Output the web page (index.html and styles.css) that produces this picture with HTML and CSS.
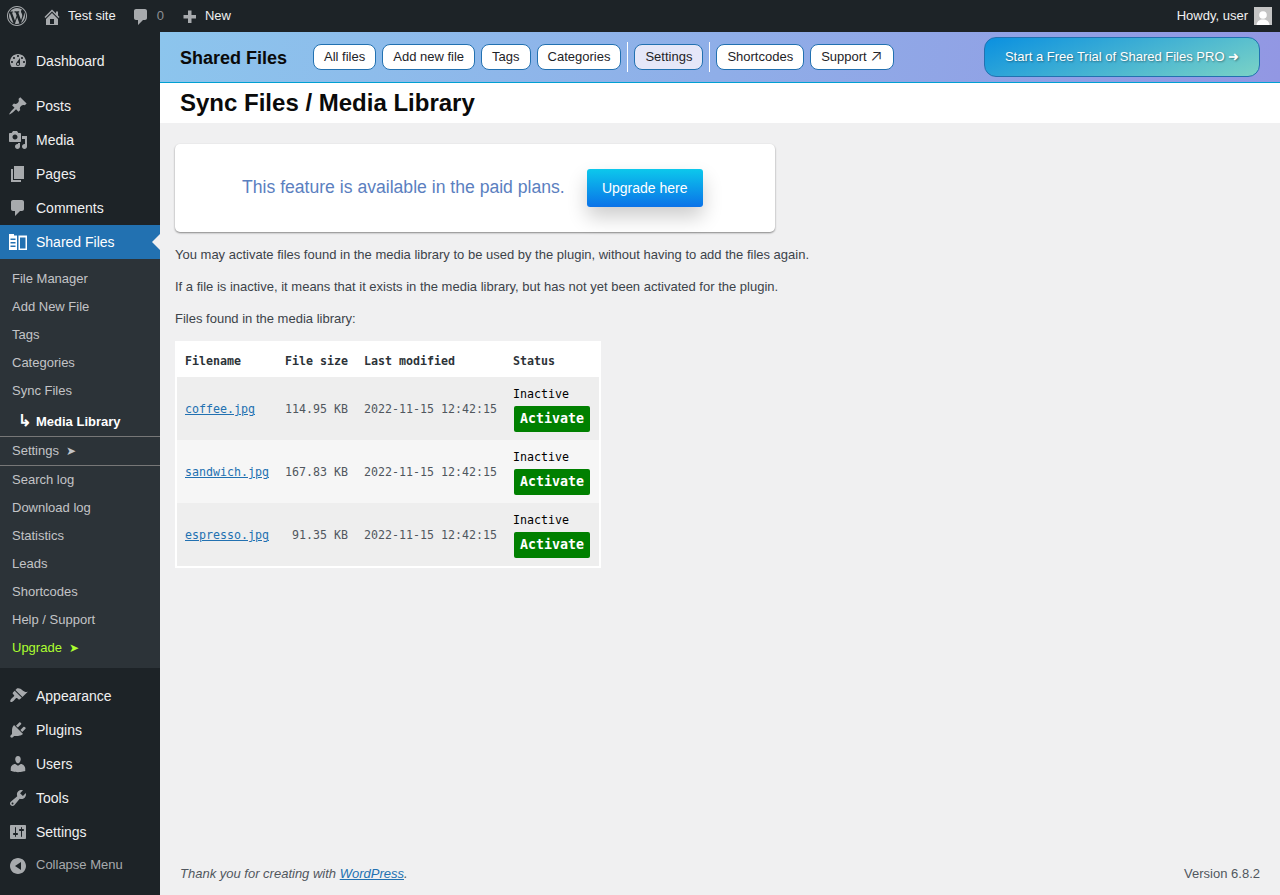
FILE: index.html
```html
<!DOCTYPE html>
<html lang="en">
<head>
<meta charset="utf-8">
<title>Sync Files / Media Library</title>
<link rel="stylesheet" href="styles.css">
</head>
<body>
<header class="adminbar">
  <svg class="bar-icon logo" viewBox="0 0 20 20"><path d="M20 10c0-5.52-4.48-10-10-10S0 4.48 0 10s4.48 10 10 10 10-4.48 10-10zM10 1.01c4.97 0 8.99 4.02 8.99 8.99s-4.02 8.99-8.99 8.99S1.01 14.97 1.01 10 5.03 1.01 10 1.01zM8.01 14.82L4.96 6.61c.49-.03 1.05-.08 1.05-.08.43-.05.38-1.01-.06-.99 0 0-1.29.1-2.13.1-.15 0-.33 0-.52-.01 1.44-2.17 3.9-3.6 6.7-3.6 2.09 0 3.99.79 5.41 2.09-.6-.08-1.45.35-1.45 1.42 0 .66.38 1.22.79 1.88.31.54.5 1.22.5 2.21 0 1.34-1.27 4.48-1.27 4.48l-2.71-7.5c.48-.03.75-.16.75-.16.43-.05.38-1.1-.05-1.08 0 0-1.3.11-2.14.11-.78 0-2.11-.11-2.11-.11-.43-.02-.48 1.06-.05 1.08l.84.08 1.12 3.04zm6.02 2.15L16.64 10s.67-1.69.39-3.81c.63 1.15.94 2.42.94 3.81 0 2.96-1.56 5.58-3.94 6.97zM2.68 6.77L6.5 17.25c-2.67-1.3-4.47-4.08-4.47-7.25 0-1.16.2-2.23.65-3.23zm7.45 4.53l2.29 6.25c-.75.27-1.57.42-2.42.42-.72 0-1.41-.11-2.06-.3z"/></svg>
  <svg class="bar-icon home" viewBox="0 0 20 20"><path d="M16 8.5l1.53 1.53-1.06 1.06L10 4.62l-6.47 6.47-1.06-1.06L10 2.5l4 4v-2h2v4zm-6-2.46l6 5.99V18H4v-5.97zM12 17v-5H8v5h4z"/></svg>
  <span class="bar-text">Test site</span>
  <svg class="bar-icon comment" viewBox="0 0 20 20"><path d="M5 2h9c1.1 0 2 .9 2 2v7c0 1.1-.9 2-2 2h-2l-5 5v-5H5c-1.1 0-2-.9-2-2V4c0-1.1.9-2 2-2z"/></svg>
  <span class="bar-text bar-count">0</span>
  <svg class="bar-icon plus" viewBox="0 0 20 20"><path d="M8 3.5h3.5V8H16v3.5h-4.5V16H8v-4.5H3.500V8H8z"/></svg>
  <span class="bar-text">New</span>
  <span class="bar-text howdy">Howdy, user</span>
  <svg class="avatar" viewBox="0 0 18 18"><rect width="18" height="18" fill="#c4c4c4"/><circle cx="9" cy="8" r="3.800" fill="#fff"/><path d="M2.500 18c.5-4 3-5.500 6.500-5.500s6 1.500 6.500 5.500z" fill="#fff"/></svg>
</header>

<div class="layout">
  <nav class="sidebar">
    <ul class="menu top-group">
      <li class="menu-item"><svg class="menu-icon" viewBox="0 0 20 20"><path d="M3.760 16h12.480c1.100-1.370 1.760-3.110 1.760-5 0-4.420-3.580-8-8-8s-8 3.580-8 8c0 1.890.66 3.630 1.760 5zM10 4c.55 0 1 .45 1 1s-.45 1-1 1-1-.45-1-1 .45-1 1-1zM6 6c.55 0 1 .45 1 1s-.45 1-1 1-1-.45-1-1 .45-1 1-1zm8 0c.55 0 1 .45 1 1s-.45 1-1 1-1-.45-1-1 .45-1 1-1zm-5.370 5.550L12 7v6c0 1.100-.9 2-2 2s-2-.9-2-2c0-.57.24-1.080.63-1.450zM4 10c.55 0 1 .45 1 1s-.45 1-1 1-1-.45-1-1 .45-1 1-1zm12 0c.55 0 1 .45 1 1s-.45 1-1 1-1-.45-1-1 .45-1 1-1zm-5 3c0-.55-.45-1-1-1s-1 .45-1 1 .45 1 1 1 1-.45 1-1z"/></svg>Dashboard</li>
    </ul>
    <ul class="menu mid-group">
      <li class="menu-item"><svg class="menu-icon" viewBox="0 0 20 20"><path d="M10.440 3.020l1.820-1.820 6.360 6.350-1.830 1.820c-1.050-.68-2.480-.57-3.410.36l-.75.75c-.92.93-1.040 2.350-.35 3.410l-1.830 1.820-2.410-2.410-2.800 2.790c-.42.42-3.380 2.710-3.800 2.290s1.860-3.390 2.280-3.810l2.790-2.790L4.100 9.360l1.830-1.820c1.050.69 2.480.57 3.400-.36l.75-.75c.93-.92 1.050-2.350.36-3.410z"/></svg>Posts</li>
      <li class="menu-item"><svg class="menu-icon" viewBox="0 0 20 20"><path d="M13 11V4c0-.55-.45-1-1-1h-1.670L9 1H5L3.670 3H2c-.55 0-1 .45-1 1v7c0 .55.45 1 1 1h10c.55 0 1-.45 1-1zM7 4.500c1.380 0 2.500 1.120 2.500 2.500S8.380 9.500 7 9.500 4.500 8.380 4.500 7 5.620 4.500 7 4.500zM14 6h5v10.500c0 1.380-1.120 2.500-2.500 2.500S14 17.880 14 16.500s1.120-2.500 2.500-2.500c.17 0 .34.02.5.05V9h-3V6zm-4 8.050V13h2v3.500c0 1.380-1.120 2.500-2.500 2.500S7 17.880 7 16.500 8.120 14 9.500 14c.17 0 .34.02.5.05z"/></svg>Media</li>
      <li class="menu-item"><svg class="menu-icon" viewBox="0 0 20 20"><path d="M6 15V2h10v13H6zm-1 1h8v2H3V5h2v11z"/></svg>Pages</li>
      <li class="menu-item"><svg class="menu-icon" viewBox="0 0 20 20"><path d="M5 2h9c1.100 0 2 .9 2 2v7c0 1.100-.9 2-2 2h-2l-5 5v-5H5c-1.100 0-2-.9-2-2V4c0-1.100.9-2 2-2z"/></svg>Comments</li>
      <li class="menu-item current"><svg class="menu-icon sf-icon" viewBox="0 0 18 16"><path fill="#fff" d="M0 0h5v1.500h3V16H0zM1.500 4.500v1.500h5V4.500zM1.500 8v1.500h5V8zM1.500 11.500V13h5v-1.500zM9.500 1.500H18V16H9.500zM11 3.500V14.500h5.500V3.500z"/></svg>Shared Files</li>
    </ul>
    <ul class="submenu">
      <li class="sub-item">File Manager</li>
      <li class="sub-item">Add New File</li>
      <li class="sub-item">Tags</li>
      <li class="sub-item">Categories</li>
      <li class="sub-item">Sync Files</li>
      <li class="sub-item sub-current"><span class="sub-arrow">↳</span>Media Library</li>
      <li class="sub-item sub-ruled">Settings<span class="sub-mark">➤</span></li>
      <li class="sub-item">Search log</li>
      <li class="sub-item">Download log</li>
      <li class="sub-item">Statistics</li>
      <li class="sub-item">Leads</li>
      <li class="sub-item">Shortcodes</li>
      <li class="sub-item">Help / Support</li>
      <li class="sub-item sub-upgrade">Upgrade<span class="sub-mark">➤</span></li>
    </ul>
    <ul class="menu low-group">
      <li class="menu-item"><svg class="menu-icon" viewBox="0 0 20 20"><path d="M14.480 11.060L7.410 3.990l1.500-1.500c.5-.56 2.300-.47 3.510.32 1.210.8 1.430 1.280 2.910 2.100 1.180.64 2.450 1.260 4.450.85zm-.71.71L6.700 4.700 4.930 6.470c-.39.39-.39 1.020 0 1.410l1.060 1.060c.39.39.39 1.030 0 1.420-.6.6-1.430 1.150-2.210 1.930-.76.76-2.160 2.690-1.330 3.520.83.830 2.760-.57 3.520-1.330.78-.78 1.330-1.610 1.930-2.210.39-.39 1.030-.39 1.420 0l1.060 1.060c.39.39 1.020.39 1.410 0z"/></svg>Appearance</li>
      <li class="menu-item"><svg class="menu-icon" viewBox="0 0 20 20"><path d="M13.110 4.360L9.870 7.600 8 5.730l3.240-3.240c.35-.34 1.050-.2 1.560.32.52.51.66 1.210.31 1.550zm-8 1.770l.91-1.120 9.010 9.010-1.190.84c-.71.71-2.630 1.160-3.820 1.160H6.140L4.900 17.260c-.59.59-1.540.59-2.120 0-.59-.58-.59-1.530 0-2.120l1.240-1.240v-3.880c0-1.130.4-3.190 1.090-3.890zm7.260 3.970l3.240-3.240c.34-.35 1.040-.21 1.550.31.52.51.66 1.210.31 1.550l-3.240 3.250z"/></svg>Plugins</li>
      <li class="menu-item"><svg class="menu-icon" viewBox="0 0 20 20"><path d="M10 9.250c-2.270 0-2.730-3.440-2.730-3.440C7 4.020 7.820 2 9.970 2c2.160 0 2.980 2.020 2.710 3.810 0 0-.41 3.440-2.680 3.440zm0 2.570L12.720 10c2.390 0 4.520 2.330 4.520 4.530v2.490s-3.650 1.130-7.240 1.130c-3.650 0-7.240-1.130-7.240-1.130v-2.490c0-2.250 1.940-4.480 4.470-4.480z"/></svg>Users</li>
      <li class="menu-item"><svg class="menu-icon" viewBox="0 0 20 20"><path d="M16.680 9.770c-1.340 1.340-3.300 1.670-4.950.99l-5.410 6.520c-.99.99-2.590.99-3.580 0s-.99-2.590 0-3.570l6.520-5.420c-.68-1.650-.35-3.610.99-4.950 1.280-1.280 3.120-1.620 4.720-1.060l-2.890 2.890 2.820 2.820 2.860-2.870c.53 1.580.18 3.390-1.080 4.670zM3.810 16.210c.4.39 1.040.39 1.430 0 .4-.4.4-1.040 0-1.430-.39-.4-1.030-.4-1.430 0-.39.39-.39 1.030 0 1.430z"/></svg>Tools</li>
      <li class="menu-item"><svg class="menu-icon" viewBox="0 0 20 20"><path d="M18 16V4c0-.55-.45-1-1-1H3c-.55 0-1 .45-1 1v12c0 .55.45 1 1 1h14c.55 0 1-.45 1-1zM8 11h1c.55 0 1 .45 1 1s-.45 1-1 1H8v1.500c0 .28-.22.5-.5.5s-.5-.22-.5-.5V13H6c-.55 0-1-.45-1-1s.45-1 1-1h1V5.500c0-.28.22-.5.5-.5s.5.22.5.5V11zm5-2h-1c-.55 0-1-.45-1-1s.45-1 1-1h1V5.500c0-.28.22-.5.5-.5s.5.22.5.5V7h1c.55 0 1 .45 1 1s-.45 1-1 1h-1v5.500c0 .28-.22.5-.5.5s-.5-.22-.5-.5V9z"/></svg>Settings</li>
      <li class="menu-item collapse"><svg class="menu-icon" viewBox="0 0 20 20"><path d="M18 10c0-4.420-3.580-8-8-8s-8 3.580-8 8 3.580 8 8 8 8-3.580 8-8zm-5-4v8l-6-4z"/></svg>Collapse Menu</li>
    </ul>
  </nav>

  <main class="main">
    <div class="plugin-head">
      <strong class="plugin-name">Shared Files</strong>
      <a class="pill">All files</a>
      <a class="pill">Add new file</a>
      <a class="pill">Tags</a>
      <a class="pill">Categories</a>
      <span class="divider"></span>
      <a class="pill pill-active">Settings</a>
      <span class="divider"></span>
      <a class="pill">Shortcodes</a>
      <a class="pill">Support <span class="ext-arrow">↗</span></a>
      <a class="trial">Start a Free Trial of Shared Files PRO ➜</a>
    </div>
    <h1 class="page-title">Sync Files / Media Library</h1>
    <div class="content">
      <div class="notice">
        <span class="notice-text">This feature is available in the paid plans.</span>
        <a class="upgrade-btn">Upgrade here</a>
      </div>
      <p class="copy">You may activate files found in the media library to be used by the plugin, without having to add the files again.</p>
      <p class="copy">If a file is inactive, it means that it exists in the media library, but has not yet been activated for the plugin.</p>
      <p class="copy">Files found in the media library:</p>
      <table class="files">
        <thead>
          <tr><th>Filename</th><th>File size</th><th>Last modified</th><th>Status</th></tr>
        </thead>
        <tbody>
          <tr class="odd"><td><a class="file-link">coffee.jpg</a></td><td class="num">114.95 KB</td><td>2022-11-15 12:42:15</td><td class="status">Inactive<a class="activate">Activate</a></td></tr>
          <tr class="even"><td><a class="file-link">sandwich.jpg</a></td><td class="num">167.83 KB</td><td>2022-11-15 12:42:15</td><td class="status">Inactive<a class="activate">Activate</a></td></tr>
          <tr class="odd"><td><a class="file-link">espresso.jpg</a></td><td class="num">91.35 KB</td><td>2022-11-15 12:42:15</td><td class="status">Inactive<a class="activate">Activate</a></td></tr>
        </tbody>
      </table>
    </div>
    <footer class="footer">
      <em>Thank you for creating with <a class="footer-link">WordPress</a>.</em>
      <span>Version 6.8.2</span>
    </footer>
  </main>
</div>
</body>
</html>
```

FILE: styles.css
```css
* { box-sizing: border-box; }
html, body { margin: 0; padding: 0; }
body {
  height: 895px;
  overflow: hidden;
  display: flex;
  flex-direction: column;
  background: #f0f0f1;
  color: #3c434a;
  font: 13px/1.4 "Liberation Sans", Arial, sans-serif;
}
ul { list-style: none; margin: 0; padding: 0; }

/* admin bar */
.adminbar {
  height: 32px;
  flex: none;
  display: flex;
  align-items: center;
  background: #1d2327;
  padding: 0 8px 0 7px;
  color: #f0f0f1;
}
.bar-icon { width: 20px; height: 20px; fill: #a7aaad; flex: none; }
.logo { margin-top: -1px; }
.home { margin: 1px 6px 0 15px; }
.comment { margin: 1px 6px 0 15px; }
.plus { margin: 1px 5px 0 16px; }
.bar-text { line-height: 32px; }
.bar-count { color: #8c8f94; }
.howdy { margin-left: auto; margin-right: 6px; }
.avatar { width: 18px; height: 18px; flex: none; }

/* sidebar */
.layout { flex: 1; display: flex; min-height: 0; }
.sidebar {
  width: 160px;
  flex: none;
  background: #1d2327;
  padding-top: 12px;
}
.top-group { margin-bottom: 11px; }
.low-group { margin-top: 11px; }
.menu-item {
  height: 34px;
  padding-top: 2px;
  display: flex;
  align-items: center;
  position: relative;
  font-size: 14px;
  color: #f0f0f1;
}
.menu-icon { width: 20px; height: 20px; margin: -2px 8px 0; fill: #a7aaad; flex: none; }
.current { background: #2271b1; color: #fff; }
.current::after {
  content: "";
  position: absolute;
  right: 0;
  top: 9px;
  border: 8px solid transparent;
  border-right-color: #f0f0f1;
}
.sf-icon { width: 18px; height: 16px; margin: -2px 9px 0; }
.collapse { font-size: 13px; color: #a7aaad; height: 32px; padding-top: 0; }
.collapse .menu-icon { margin-top: 2px; }
.submenu {
  background: #2c3338;
  padding: 6px 0;
}
.sub-item {
  height: 28px;
  line-height: 28px;
  padding-left: 12px;
  color: #c3c4c7;
  white-space: nowrap;
}
.sub-current {
  height: 31px;
  line-height: 32px;
  color: #fff;
  font-weight: 700;
  padding-left: 18px;
}
.sub-arrow { display: inline-block; width: 18px; font-size: 16px; }
.sub-ruled {
  height: 30px;
  border-top: 1px solid #777;
  border-bottom: 1px solid #777;
}
.sub-mark { margin-left: 7px; font-size: 12px; }
.sub-upgrade { color: #adff2f; }

/* main */
.main { flex: 1; min-width: 0; display: flex; flex-direction: column; }
.plugin-head {
  height: 51px;
  flex: none;
  display: flex;
  align-items: center;
  gap: 6px;
  padding: 0 20px;
  background: linear-gradient(100deg, #8cc5ed, #9297e3);
  border-bottom: 1px solid #00a0d2;
}
.plugin-name { font-size: 18px; color: #0a0a0a; margin: 4px 20px 0 0; }
.pill {
  height: 26px;
  line-height: 24px;
  padding: 0 10px;
  background: #fff;
  border: 1px solid #2271b1;
  border-radius: 8px;
  color: #1d2327;
  white-space: nowrap;
}
.ext-arrow { font-family: "Inter", sans-serif; font-weight: 300; font-size: 16px; line-height: 0; }
.pill-active { background: #e5e7f8; }
.divider { width: 1px; height: 30px; background: #fff; }
.trial {
  margin-left: auto;
  width: 276px;
  height: 40px;
  line-height: 38px;
  text-align: center;
  border: 1px solid #2271b1;
  border-radius: 12px;
  color: #fff;
  text-shadow: 1px 1px 2px rgba(0, 0, 0, .4);
  background: linear-gradient(160deg, #0a90e0, #7bd3c6);
}
.page-title {
  height: 40px;
  flex: none;
  margin: 0;
  padding: 0 20px;
  background: #fff;
  color: #0a0a0a;
  font-size: 24px;
  font-weight: 700;
  line-height: 39px;
}
.content { padding: 21px 15px 0; flex: 1; }
.notice {
  width: 600px;
  height: 88px;
  display: flex;
  align-items: center;
  gap: 22px;
  padding-left: 67px;
  background: #fff;
  border-radius: 5px;
  box-shadow: 0 1px 2px rgba(0, 0, 0, .45);
}
.notice-text { font-size: 17.6px; color: #5b80bf; padding-bottom: 2px; }
.upgrade-btn {
  width: 116px;
  height: 38px;
  line-height: 38px;
  text-align: center;
  font-size: 14px;
  color: #fff;
  border-radius: 3px;
  background: linear-gradient(180deg, #0cc8ec, #0a72e8);
  box-shadow: 0 10px 20px rgba(0, 0, 0, .2);
}
.copy { margin: 13px 0; line-height: 19px; }
.notice + .copy { margin-top: 13px; }

/* table */
.files {
  margin-top: 13px;
  background: #fff;
  border: 2px solid #fff;
  border-collapse: separate;
  border-spacing: 0;
  font: 11.63px/1.4 "DejaVu Sans Mono", "Liberation Mono", monospace;
}
.files th {
  height: 34px;
  padding: 2px 8px 0;
  text-align: left;
  color: #2c3338;
  font-weight: 700;
}
.files td { height: 63px; padding: 2px 8px 0; color: #50575e; white-space: nowrap; }
.odd td { background: #eeeeee; }
.even td { background: #f6f6f6; }
.num { text-align: right; }
.file-link { color: #2271b1; text-decoration: underline; }
.files .status { color: #000; width: 94px; padding: 2px 9px 0 8px; }
.activate {
  display: block;
  width: 76px;
  height: 26px;
  margin: 3px 0 1px 1px;
  line-height: 26px;
  text-align: center;
  background: #008000;
  border-radius: 2px;
  color: #fff;
  font-size: 13.29px;
  font-weight: 700;
}

/* footer */
.footer {
  flex: none;
  display: flex;
  justify-content: space-between;
  height: 30px;
  padding: 0 20px;
  color: #50575e;
}
.footer-link { color: #2271b1; text-decoration: underline; }
```
